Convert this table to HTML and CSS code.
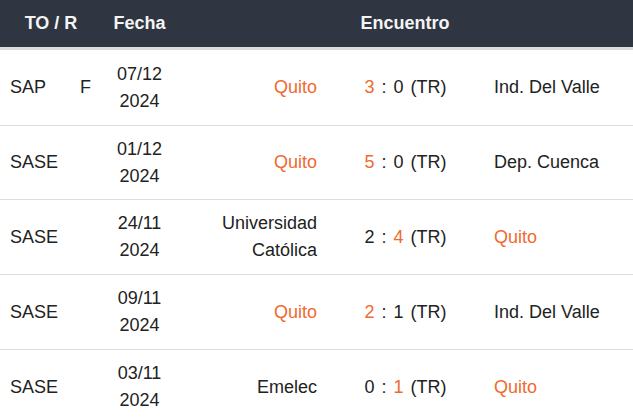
FILE: index.html
```html
<!DOCTYPE html>
<html>
<head>
<meta charset="utf-8">
<link rel="stylesheet" href="styles.css">
</head>
<body>
<table class="matches">
  <colgroup>
    <col class="c-to"><col class="c-r"><col class="c-date"><col class="c-home"><col class="c-score"><col class="c-away">
  </colgroup>
  <thead>
    <tr>
      <th colspan="2">TO / R</th>
      <th>Fecha</th>
      <th colspan="3">Encuentro</th>
    </tr>
  </thead>
  <tbody>
    <tr>
      <td class="to">SAP</td><td class="r">F</td>
      <td class="date">07/12<br>2024</td>
      <td class="home hl">Quito</td>
      <td class="score"><span class="hl">3</span> : 0 (TR)</td>
      <td class="away">Ind. Del Valle</td>
    </tr>
    <tr>
      <td class="to">SASE</td><td class="r"></td>
      <td class="date">01/12<br>2024</td>
      <td class="home hl">Quito</td>
      <td class="score"><span class="hl">5</span> : 0 (TR)</td>
      <td class="away">Dep. Cuenca</td>
    </tr>
    <tr>
      <td class="to">SASE</td><td class="r"></td>
      <td class="date">24/11<br>2024</td>
      <td class="home">Universidad<br>Católica</td>
      <td class="score">2 : <span class="hl">4</span> (TR)</td>
      <td class="away hl">Quito</td>
    </tr>
    <tr>
      <td class="to">SASE</td><td class="r"></td>
      <td class="date">09/11<br>2024</td>
      <td class="home hl">Quito</td>
      <td class="score"><span class="hl">2</span> : 1 (TR)</td>
      <td class="away">Ind. Del Valle</td>
    </tr>
    <tr>
      <td class="to">SASE</td><td class="r"></td>
      <td class="date">03/11<br>2024</td>
      <td class="home">Emelec</td>
      <td class="score">0 : <span class="hl">1</span> (TR)</td>
      <td class="away hl">Quito</td>
    </tr>
  </tbody>
</table>
</body>
</html>
```
FILE: styles.css
```css
html, body {
  margin: 0;
  padding: 0;
  background: #fff;
}
body {
  font-family: "Liberation Sans", Arial, sans-serif;
  font-size: 18px;
  color: #222;
}
.matches {
  width: 633px;
  border-collapse: collapse;
  table-layout: fixed;
}
.c-to { width: 70px; }
.c-r { width: 32px; }
.c-date { width: 75px; }
.c-home { width: 152px; }
.c-score { width: 153px; }
.c-away { width: 151px; }

.matches thead th {
  background: #2f3541;
  color: #f4f4f4;
  font-weight: bold;
  height: 47px;
  padding: 0;
  text-align: center;
  border-bottom: 3px solid #dcdcdc;
  vertical-align: middle;
}
.matches tbody td {
  height: 74px;
  padding: 0;
  line-height: 27px;
  border-bottom: 1px solid #dddddd;
  vertical-align: middle;
  white-space: nowrap;
}
.matches tbody tr:first-child td { height: 75px; }
.matches tbody tr:nth-child(2) td { height: 73px; }
.to { padding-left: 10px !important; }
.r { text-align: left; padding-left: 10px !important; }
.date { text-align: center; }
.home { text-align: right; padding-right: 12px !important; }
.score { text-align: center; word-spacing: 2px; }
.away { text-align: left; padding-left: 12px !important; }
.hl { color: #f06a2e; }
```
